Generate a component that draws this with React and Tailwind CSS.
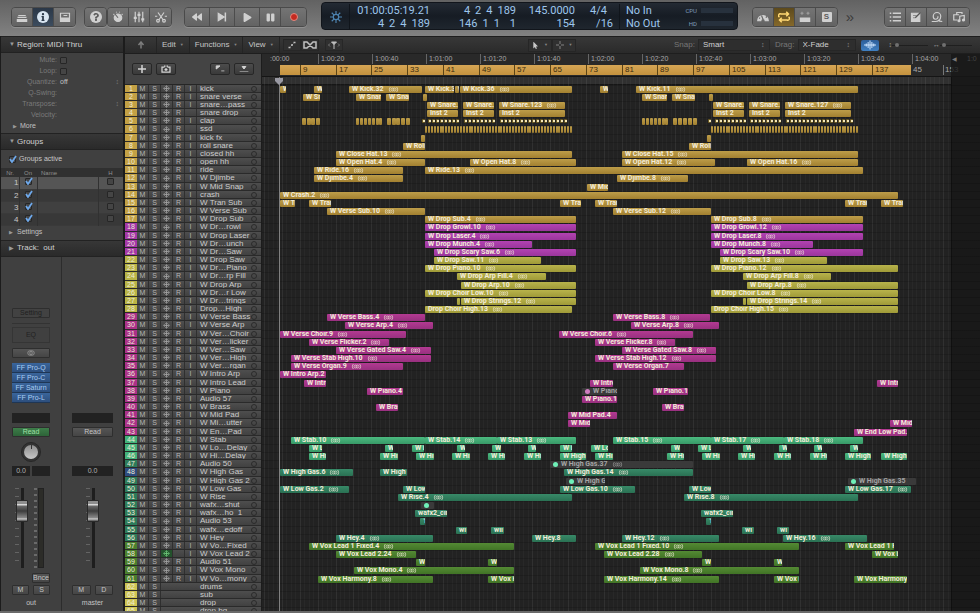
import { FaBackward, FaPlay, FaPause, FaInfo, FaQuestion, FaMousePointer } from 'react-icons/fa';
import { LuSnowflake } from 'react-icons/lu';

// timeline geometry, in window pixels
const LANES_X = 262;
const BAR_ONE = 264;
const BAR_WIDTH = 143 / 32;

const GOLD = 'bg-linear-to-b from-[#bd9d49] to-[#a28030]';
const PURPLE = 'bg-linear-to-b from-[#b342b3] to-[#9a369b]';
const YELLOW = 'bg-linear-to-b from-[#b8b34b] to-[#9f9a38]';
const PINK = 'bg-linear-to-b from-[#b33a92] to-[#98307f]';
const MINT = 'bg-linear-to-b from-[#4bba80] to-[#389a67]';
const TEAL = 'bg-linear-to-b from-[#388a68] to-[#2a7153]';
const LIME = 'bg-linear-to-b from-[#548a34] to-[#417426]';

const FILL = { gold: GOLD, purple: PURPLE, yellow: YELLOW, pink: PINK, mint: MINT, teal: TEAL, lime: LIME };

const BADGE = {
  gold: 'bg-[#c3a145]',
  purple: 'bg-[#a537a8]',
  yellow: 'bg-[#b8b446]',
  pink: 'bg-[#ab3189]',
  mint: 'bg-[#43b27a]',
  teal: 'bg-[#2d7b5b]',
  lime: 'bg-[#4a7f2e]',
  blue: 'bg-[#2d4c80]',
  stack: 'bg-[#cdc453]',
};

// region: [start, end, label, flags]; flags: t = loop mark, m = muted take, d = white dot
function run(from, count, step, width, flag) {
  return Array.from({ length: count }, (_, i) => {
    const x = Math.round(from + i * step);
    return [x, x + width, '', flag];
  });
}

const TRACKS = [
  ['kick', 'gold', [[280, 286, 'W'], [314, 322, 'W'], [349, 422, 'W Kick.32', 't'], [425, 454, 'W Kick.3'], [455, 459, 'W'], [460, 572, 'W Kick.36', 't'], [600, 608, 'W'], [636, 858, 'W Kick.11', 't']]],
  ['snare verse', 'gold', [[303, 320, 'W Snar'], [356, 381, 'W Snar'], [386, 409, 'W Snar'], [423, 427, ''], [642, 667, 'W Snar'], [672, 695, 'W Snar'], [709, 713, '']]],
  ['snare…pass', 'gold', [[427, 458, 'W Snare.'], [463, 494, 'W Snare.'], [499, 565, 'W Snare.123', 't'], [713, 744, 'W Snare.'], [749, 780, 'W Snare.'], [785, 851, 'W Snare.127', 't']]],
  ['snare drop', 'gold', [[427, 458, 'Inst 2'], [463, 494, 'Inst 2'], [499, 565, 'Inst 2'], [713, 744, 'Inst 2'], [749, 780, 'Inst 2'], [785, 851, 'Inst 2']]],
  ['clap', 'gold', [
    ...run(302, 4, 4.6, 4), ...run(356, 7, 3.9, 3), ...run(387, 5, 4.7, 4),
    ...run(422, 1, 4, 1, 'd'), ...run(428, 8, 4, 1, 'd'), ...run(464, 8, 4, 1, 'd'), ...run(500, 17, 4, 1, 'd'),
    ...run(642, 7, 3.9, 3), ...run(673, 5, 4.9, 4),
    ...run(708, 1, 4, 1, 'd'), ...run(715, 8, 4, 1, 'd'), ...run(750, 8, 4, 1, 'd'), ...run(786, 17, 4, 1, 'd'),
  ]],
  ['ssd', 'gold', [...run(425, 51, 2.9, 2), ...run(711, 51, 2.9, 2)]],
  ['kick fx', 'gold', [[421, 425, ''], [707, 711, '']]],
  ['roll snare', 'gold', [[403, 425, 'W Roll'], [689, 711, 'W Roll']]],
  ['closed hh', 'gold', [[336, 572, 'W Close Hat.13', 't'], [622, 858, 'W Close Hat.15', 't']]],
  ['open hh', 'gold', [[336, 425, 'W Open Hat.4', 't'], [470, 576, 'W Open Hat.8', 't'], [622, 715, 'W Open Hat.12', 't'], [747, 858, 'W Open Hat.16', 't']]],
  ['ride', 'gold', [[314, 403, 'W Ride.16', 't'], [425, 863, 'W Ride.13', 't']]],
  ['W Djimbe', 'gold', [[314, 403, 'W Djimbe.4', 't'], [617, 688, 'W Djimbe.8', 't']]],
  ['W Mid Snap', 'gold', [[587, 608, 'W Mid']]],
  ['crash', 'gold', [[280, 898, 'W Crash.2', 't']]],
  ['W Tran Sub', 'gold', [[280, 295, 'W Tr'], [309, 331, 'W Tran'], [560, 581, 'W Tran'], [595, 617, 'W Tran'], [845, 867, 'W Tran'], [881, 903, 'W Tran']]],
  ['W Verse Sub', 'gold', [[327, 425, 'W Verse Sub.10', 't'], [613, 711, 'W Verse Sub.12', 't']]],
  ['W Drop Sub', 'gold', [[425, 576, 'W Drop Sub.4', 't'], [711, 863, 'W Drop Sub.8', 't']]],
  ['W Dr…rowl', 'purple', [[425, 576, 'W Drop Growl.10', 't'], [711, 863, 'W Drop Growl.12', 't']]],
  ['W Drop Laser', 'purple', [[425, 576, 'W Drop Laser.4', 't'], [711, 863, 'W Drop Laser.8', 't']]],
  ['W Dr…unch', 'purple', [[425, 532, 'W Drop Munch.4', 't'], [711, 813, 'W Drop Munch.8', 't']]],
  ['W Dr…Saw', 'purple', [[434, 576, 'W Drop Scary Saw.6', 't'], [720, 863, 'W Drop Scary Saw.10', 't']]],
  ['W Drop Saw', 'yellow', [[434, 541, 'W Drop Saw.11', 't'], [720, 827, 'W Drop Saw.13', 't']]],
  ['W Dr…Piano', 'yellow', [[425, 576, 'W Drop Piano.10', 't'], [711, 898, 'W Drop Piano.12', 't']]],
  ['W Dr…rp Fill', 'yellow', [[457, 546, 'W Drop Arp Fill.4', 't'], [743, 831, 'W Drop Arp Fill.8', 't']]],
  ['W Drop Arp', 'yellow', [[461, 576, 'W Drop Arp.10', 't'], [747, 898, 'W Drop Arp.8', 't']]],
  ['W Dr…r Low', 'yellow', [[425, 576, 'W Drop Choir Low.10', 't'], [711, 898, 'W Drop Choir Low.8', 't']]],
  ['W Dr…trings', 'yellow', [[457, 460, ''], [461, 576, 'W Drop Strings.12', 't'], [743, 746, ''], [747, 898, 'W Drop Strings.14', 't']]],
  ['Drop…High', 'yellow', [[425, 572, 'Drop Choir High.13', 't'], [711, 898, 'Drop Choir High.15', 't']]],
  ['W Verse Bass', 'pink', [[327, 425, 'W Verse Bass.4', 't'], [613, 710, 'W Verse Bass.8', 't']]],
  ['W Verse Arp', 'pink', [[345, 433, 'W Verse Arp.4', 't'], [631, 719, 'W Verse Arp.8', 't']]],
  ['W Ver…Choir', 'pink', [[280, 406, 'W Verse Choir.9', 't'], [559, 693, 'W Verse Choir.6', 't']]],
  ['W Ver…licker', 'pink', [[309, 389, 'W Verse Flicker.2', 't'], [595, 675, 'W Verse Flicker.8', 't']]],
  ['W Ver…Saw', 'pink', [[336, 431, 'W Verse Gated Saw.4', 't'], [622, 716, 'W Verse Gated Saw.8', 't']]],
  ['W Ver…High', 'pink', [[291, 431, 'W Verse Stab High.10', 't'], [595, 716, 'W Verse Stab High.12', 't']]],
  ['W Ver…rgan', 'pink', [[291, 403, 'W Verse Organ.9', 't'], [613, 684, 'W Verse Organ.7']]],
  ['W Intro Arp', 'pink', [[280, 326, 'W Intro Arp.2']]],
  ['W Intro Lead', 'pink', [[304, 326, 'W Intro'], [590, 613, 'W Intro'], [877, 898, 'W Intro']]],
  ['W Piano', 'pink', [[367, 403, 'W Piano.4'], [582, 617, 'W Piano', 'm'], [653, 688, 'W Piano.12']]],
  ['Audio 57', 'pink', [[582, 617, 'W Piano.14']]],
  ['W Brass', 'pink', [[376, 398, 'W Bras'], [662, 684, 'W Bras']]],
  ['W Mid Pad', 'pink', [[568, 617, 'W Mid Pad.4']]],
  ['W Mi…utter', 'pink', [[568, 590, 'W Mid'], [890, 912, 'W Mid']]],
  ['W En…Pad', 'pink', [[854, 907, 'W End Low Pad.']]],
  ['W Stab', 'mint', [[291, 425, 'W Stab.10', 't'], [425, 497, 'W Stab.14', 't'], [497, 576, 'W Stab.13', 't'], [613, 711, 'W Stab.15', 't'], [711, 784, 'W Stab.17', 't'], [784, 863, 'W Stab.18', 't']]],
  ['W Lo…Delay', 'mint', [[309, 322, 'W L'], [385, 393, 'W'], [412, 424, 'W L'], [457, 465, 'W'], [492, 501, 'W'], [528, 536, 'W'], [560, 572, 'W L'], [591, 608, 'W Lo'], [671, 680, 'W'], [698, 711, 'W L'], [743, 751, 'W'], [779, 787, 'W'], [814, 822, 'W'], [850, 858, 'W']]],
  ['W Hi…Delay', 'mint', [[309, 326, 'W Hi'], [380, 398, 'W Hi'], [416, 434, 'W Hi'], [452, 470, 'W Hi'], [488, 505, 'W Hi'], [524, 541, 'W Hi'], [560, 586, 'W High'], [595, 613, 'W Hi'], [667, 684, 'W Hi'], [702, 720, 'W Hi'], [738, 755, 'W Hi'], [774, 791, 'W Hi'], [810, 827, 'W Hi'], [845, 871, 'W High'], [881, 907, 'W High']]],
  ['Audio 50', 'teal', [[550, 693, 'W High Gas.37', 'mt']]],
  ['W High Gas', 'teal', [[280, 353, 'W High Gas.6', 't'], [380, 407, 'W High'], [564, 693, 'W High Gas.14', 't']]],
  ['W High Gas 2', 'teal', [[566, 605, 'W High G', 'm'], [848, 916, 'W High Gas.35', 'm']]],
  ['W Low Gas', 'teal', [[280, 349, 'W Low Gas.2', 't'], [403, 425, 'W Low'], [560, 635, 'W Low Gas.10', 't'], [689, 711, 'W Low'], [845, 911, 'W Low Gas.17', 't']]],
  ['W Rise', 'teal', [[398, 572, 'W Rise.4', 't'], [684, 858, 'W Rise.8', 't']]],
  ['wafx…shut', 'teal', [[421, 434, '', 'm']]],
  ['wafx…ho_1', 'teal', [[415, 447, 'wafx2_cine'], [701, 733, 'wafx2_cine']]],
  ['Audio 53', 'teal', [[420, 425, '1'], [706, 711, '1']]],
  ['wafx…edoff', 'teal', [[456, 467, 'wi'], [491, 504, 'wii'], [742, 754, 'wi'], [777, 789, 'wi']]],
  ['W Hey', 'teal', [[336, 433, 'W Hey.4', 't'], [532, 576, 'W Hey.8'], [622, 719, 'W Hey.12', 't'], [783, 867, 'W Hey.16', 't']]],
  ['W Vo…Fixed', 'lime', [[309, 514, 'W Vox Lead 1 Fixed.4', 't'], [595, 799, 'W Vox Lead 1 Fixed.10', 't'], [845, 894, 'W Vox Lead 1 F']]],
  ['W Vox Lead 2', 'lime', [[336, 416, 'W Vox Lead 2.24', 't'], [604, 702, 'W Vox Lead 2.28', 't'], [872, 898, 'W Vox L']]],
  ['Audio 51', 'lime', [[416, 425, 'W'], [488, 497, 'W'], [702, 711, 'W'], [774, 782, 'W']]],
  ['W Vox Mono', 'lime', [[354, 514, 'W Vox Mono.4', 't'], [640, 799, 'W Vox Mono.8', 't']]],
  ['W Vo…mony', 'lime', [[318, 433, 'W Vox Harmony.8', 't'], [488, 514, 'W Vox H'], [604, 719, 'W Vox Harmony.14', 't'], [774, 799, 'W Vox H'], [854, 907, 'W Vox Harmony']]],
  ['drums', 'stack', []],
  ['sub', 'stack', []],
  ['drop', 'stack', []],
  ['drop bg', 'stack', []],
];

const TIMES = ['1:00:20', '1:00:40', '1:01:00', '1:01:20', '1:01:40', '1:02:00', '1:02:20', '1:02:40', '1:03:00', '1:03:20', '1:03:40', '1:04:00'];
const BARS = Array.from({ length: 17 }, (_, i) => 9 + i * 8);
const INSERTS = ['FF Pro-Q', 'FF Pro-C', 'FF Saturn', 'FF Pro-L'];

/* ---------- toolbar ---------- */

function ToolButton({ label, active, gold, wide, children }) {
  return (
    <button
      aria-label={label}
      className={`flex h-[18px] items-center justify-center border-r border-[#4c4c4c] last:border-r-0 ${wide ? 'w-[25px]' : 'w-[21px]'} ${
        active ? 'bg-linear-to-b from-[#2b3848] to-[#3c4c5e] text-[#e6f0fa]'
        : gold ? 'bg-linear-to-b from-[#5d4a1c] to-[#85682a] text-[#ffd873]'
        : 'bg-linear-to-b from-[#747474] to-[#636363] text-[#d0d0d0]'
      }`}
    >
      {children}
    </button>
  );
}

function Group({ children }) {
  return <div className="flex shrink-0 overflow-hidden rounded-sm border border-[#4a4a4a] shadow-[0_1px_0_#8f8f8f]">{children}</div>;
}

function Icon({ children, size = 'size-3' }) {
  return (
    <svg viewBox="0 0 16 16" className={size} fill="none" stroke="currentColor" strokeWidth="1.6">
      {children}
    </svg>
  );
}

function Digits({ parts }) {
  return (
    <span className="flex justify-end gap-[5px]">
      {parts.map((p, i) => <span key={i}>{p}</span>)}
    </span>
  );
}

function Lcd() {
  return (
    <div className="mx-[14px] flex h-7 flex-1 overflow-hidden rounded-sm border border-[#11151b] bg-linear-to-b from-[#232a33] via-[#161c24] to-[#1f262e] pt-px font-[Roboto] text-[11px] leading-[13px] text-[#9dc6ec]">
      <div className="flex w-7 items-center justify-center border-r border-[#10151b] text-[#4d83b0]">
        <Icon>
          <circle cx="8" cy="8" r="3.6" />
          <path d="M8 0v4M8 12v4M0 8h4M12 8h4M2.3 2.3l2.9 2.9M10.8 10.8l2.9 2.9M2.3 13.7l2.9-2.9M10.8 5.2l2.9-2.9" />
        </Icon>
      </div>
      <div className="w-20 text-right">
        <p>01:00:05:19.21</p>
        <Digits parts={['4', '2', '4', '189']} />
      </div>
      <div className="w-[86px] text-right">
        <Digits parts={['4', '2', '4', '189']} />
        <Digits parts={['146', '1', '1', '', '1']} />
      </div>
      <div className="w-[59px] text-right">
        <p>145.0000</p>
        <p>154</p>
      </div>
      <div className="w-[38px] text-right">
        <p className="pr-[6px]">4/4</p>
        <p>/16</p>
      </div>
      <div className="ml-[6px] w-14 border-l border-[#10151b] pl-[6px]">
        <p>No In</p>
        <p>No Out</p>
      </div>
      <div className="ml-auto w-14 pr-1 text-[6px] text-[#7f9dbb]">
        {['CPU', 'HD'].map(m => (
          <div key={m} className="flex h-[13px] items-center gap-1">
            <span className="w-4 text-right">{m}</span>
            <span className="h-[5px] flex-1 bg-[#27313d]" />
          </div>
        ))}
      </div>
    </div>
  );
}

function Toolbar() {
  return (
    <header className="flex h-9 shrink-0 items-start bg-linear-to-b from-[#626262] to-[#828282] pt-[2px] pr-[10px] pl-[11px]">
      <div className="flex pt-[5px]">
        <Group>
          <ToolButton label="Library">
            <Icon><path d="M3 6h10M2 8.500h12" /><path d="M1 12.500h14" strokeWidth="4" /></Icon>
          </ToolButton>
          <ToolButton label="Inspector" active>
            <span className="flex size-3 items-center justify-center rounded-full bg-[#d9e6f2] text-[#2c3a4a]"><FaInfo size={8} /></span>
          </ToolButton>
          <ToolButton label="Toolbar">
            <Icon><path d="M2 3h12v11H2z" /><path d="M2 11h12" strokeWidth="5" /><path d="M6 6h5" /></Icon>
          </ToolButton>
        </Group>
        <div className="ml-2 flex">
          <Group>
            <ToolButton label="Quick Help">
              <span className="flex size-3 items-center justify-center rounded-full bg-[#d0d0d0] text-[#5c5c5c]"><FaQuestion size={8} /></span>
            </ToolButton>
          </Group>
          <Group>
            <ToolButton label="Smart Controls">
              <Icon><circle cx="8" cy="9" r="5" fill="currentColor" /><path d="M8 9 4 4" stroke="#666" /><path d="M2 4l1 1M6 1v1M10 1v1M14 4l-1 1" /></Icon>
            </ToolButton>
            <ToolButton label="Mixer">
              <Icon><path d="M3 1v14M8 1v14M13 1v14" /><path d="M1 9h4M6 5h4M11 11h4" strokeWidth="3" /></Icon>
            </ToolButton>
            <ToolButton label="Editors">
              <Icon><path d="M4 2l7 10M12 2 5 12M0 7h3M13 7h3" /><circle cx="4" cy="13" r="1.800" /><circle cx="12" cy="13" r="1.800" /></Icon>
            </ToolButton>
          </Group>
        </div>
        <div className="ml-3">
          <Group>
            <ToolButton label="Rewind" wide><FaBackward size={10} /></ToolButton>
            <ToolButton label="Forward to end" wide>
              <Icon><path d="M3 3v10l8-5z" fill="currentColor" /><path d="M12.500 2v12" strokeWidth="2" /></Icon>
            </ToolButton>
            <ToolButton label="Play" wide><FaPlay size={9} /></ToolButton>
            <ToolButton label="Pause"><FaPause size={9} /></ToolButton>
            <ToolButton label="Record" wide><span className="size-2 rounded-full border border-[#e48a80] bg-[#c42a20]" /></ToolButton>
          </Group>
        </div>
      </div>

      <Lcd />

      <div className="flex items-start pt-[5px]">
        <Group>
          <ToolButton label="Replace">
            <Icon><path d="M1 13a7 7 0 1 1 14 0h-4a3 3 0 0 0-6 0z" fill="currentColor" /><path d="M8 11 6 6M3 9l1 1M12 9l1-2" stroke="#666" /></Icon>
          </ToolButton>
          <ToolButton label="Cycle" gold>
            <Icon><path d="M11 1l3 3-3 3M14 4H4a2 2 0 0 0-2 4M5 9l-3 3 3 3M2 12h10a2 2 0 0 0 2-4" strokeWidth="2" /></Icon>
          </ToolButton>
          <ToolButton label="Autopunch">
            <Icon><path d="M4 1v4M2 3h4M12 1v4M10 3h4" opacity=".5" /><path d="M1 11.500h14" strokeWidth="6" /></Icon>
          </ToolButton>
          <ToolButton label="Solo">
            <span className="flex size-[10px] items-center justify-center rounded-[1px] bg-[#d0d0d0] text-[8px] leading-none font-bold text-[#5c5c5c]">S</span>
          </ToolButton>
        </Group>
        <button aria-label="More controls" className="h-5 w-6 text-[15px] leading-4 text-[#3c3c3c]">»</button>
        <div className="ml-[22px]">
          <Group>
            <ToolButton label="Lists">
              <Icon><path d="M5 3h11M5 8h11M5 13h11" strokeWidth="2" /><path d="M1 3h2M1 8h2M1 13h2" strokeWidth="2" /></Icon>
            </ToolButton>
            <ToolButton label="Notes">
              <Icon><path d="M2 3h11v11H2z" fill="currentColor" /><path d="M14 2 7 9" stroke="#555" /><path d="M4 6h5M4 9h3" stroke="#777" strokeWidth="1" /></Icon>
            </ToolButton>
            <ToolButton label="Loops">
              <Icon><path d="M1 14h5c4 0 7-3 7-7a5 5 0 0 0-10 0c0 2 1 4 3 4s4-2 3-4M9 12c2 2 4 2 6 2" /></Icon>
            </ToolButton>
            <ToolButton label="Media">
              <Icon><path d="M5 5V2h7v2M8 5H1v7h5M9 13V7l6-1v6" /><circle cx="8" cy="13" r="1.300" fill="currentColor" /><circle cx="14" cy="12" r="1.300" fill="currentColor" /></Icon>
            </ToolButton>
          </Group>
        </div>
      </div>
    </header>
  );
}

/* ---------- inspector ---------- */

function Tick({ id, label, checked }) {
  return (
    <span className="relative inline-flex size-[7px]">
      <input
        id={id}
        type="checkbox"
        defaultChecked={checked}
        aria-label={label}
        className="peer size-[7px] appearance-none rounded-[1px] border border-[#262626] bg-[#454545]"
      />
      <svg viewBox="0 0 8 8" className="pointer-events-none absolute -top-px left-0 hidden size-2 peer-checked:block" fill="none" stroke="#6ea8ea" strokeWidth="1.800">
        <path d="M1 4l2 3 4-6" />
      </svg>
    </span>
  );
}

function SectionHead({ open, children }) {
  return (
    <h2 className="flex h-[17px] items-center border-y border-[#222] bg-linear-to-b from-[#373737] to-[#2a2a2a] pl-2 text-[8px] text-[#d0d0d0]">
      <span className="w-2 text-[6px] text-[#9a9a9a]">{open ? '▼' : '▶'}</span>
      {children}
    </h2>
  );
}

function Param({ label, tick, value, stepper }) {
  return (
    <div className="flex h-[11px] items-center text-[7px] text-[#7a7a7a]">
      <label htmlFor={tick ? label : undefined} className="w-14 text-right">{label}:</label>
      <span className="ml-[3px] flex flex-1 text-[#c4c4c4]">{tick ? <Tick id={label} /> : value}</span>
      {stepper && <span className="pr-1 text-[7px]">↕</span>}
    </div>
  );
}

function Groups() {
  return (
    <table className="w-full table-fixed border-collapse text-[8px] text-[#c8c8c8]">
      <thead className="bg-[#303030] text-[6px] text-[#909090]">
        <tr className="h-[9px] leading-[8px]">
          <th className="w-[18px] font-normal">Nr.</th>
          <th className="w-[18px] font-normal">On</th>
          <th className="pl-1 text-left font-normal">Name</th>
          <th className="w-[25px] font-normal">H</th>
        </tr>
      </thead>
      <tbody>
        {[1, 2, 3, 4].map(n => (
          <tr key={n} className="h-3 border-b border-[#3a3a3a] leading-[11px] first:bg-[#555] even:bg-[#383838]">
            <td className="text-right">{n}</td>
            <td className="border-x border-[#313131] text-center"><Tick label={`Group ${n} on`} checked /></td>
            <td />
            <td className="border-l border-[#313131] text-center"><Tick label={`Group ${n} hide`} /></td>
          </tr>
        ))}
      </tbody>
    </table>
  );
}

function Fader({ label }) {
  return (
    <span className="relative flex h-20 w-3 justify-center">
      <span className="absolute inset-y-0 -left-px w-1 bg-[repeating-linear-gradient(to_bottom,#646464_0_1px,transparent_1px_8px)]" />
      <span className="absolute inset-y-0 left-[5px] w-[3px] bg-[#1e1e1e]" />
      <input
        type="range"
        aria-label={label}
        defaultValue={79}
        className="relative h-20 w-3 appearance-none bg-transparent [direction:rtl] [writing-mode:vertical-lr] [&::-webkit-slider-thumb]:h-[22px] [&::-webkit-slider-thumb]:w-3 [&::-webkit-slider-thumb]:appearance-none [&::-webkit-slider-thumb]:rounded-[1px] [&::-webkit-slider-thumb]:border [&::-webkit-slider-thumb]:border-[#2a2a2a] [&::-webkit-slider-thumb]:bg-[linear-gradient(to_bottom,#8e8e8e_0_3px,#d8d8d8_3px_4px,#6a6a6a_5px,#3c3c3c_10px,#8c8c8c_17px,#dedede_18px,#6a6a6a_19px)]"
      />
    </span>
  );
}

function StripButton({ children, tone = 'bg-linear-to-b from-[#555] to-[#454545] text-[#c4c4c4]' }) {
  return <button className={`block h-[10px] w-full rounded-[1px] border border-[#2e2e2e] text-[7px] leading-[8px] ${tone}`}>{children}</button>;
}

function Well({ wide, children }) {
  return <div className={`h-[10px] bg-[#222] text-center text-[7px] leading-[10px] text-[#b0b0b0] ${wide ? 'w-full' : 'w-[18px]'}`}>{children}</div>;
}

function OutStrip() {
  return (
    <section className="flex w-[61px] flex-col justify-end border-r border-[#2c2c2c] px-[11px] pb-1">
      <div className="border-b border-[#333] pb-[5px]">
        <StripButton tone="bg-[#424242] text-[#1f1f1f]">Setting</StripButton>
      </div>
      <div className="mt-[3px] h-4 border border-[#353535] text-center text-[7px] leading-[14px] text-[#222]">EQ</div>
      <div className="mt-[5px]">
        <StripButton>
          <svg viewBox="0 0 16 12" className="mx-auto h-[6px] w-2" fill="none" stroke="#999" strokeWidth="1.600">
            <circle cx="6" cy="6" r="4.500" /><circle cx="10" cy="6" r="4.500" />
          </svg>
        </StripButton>
      </div>
      <div className="mt-[5px] flex flex-col">
        {INSERTS.map(name => (
          <button key={name} className="h-[10px] border-b border-[#1f3654] bg-linear-to-b from-[#3a659c] to-[#2d4f7d] text-[7px] leading-[9px] text-[#a9cdf3]">{name}</button>
        ))}
      </div>
      <div className="mt-[10px] flex"><Well wide /></div>
      <div className="mt-1"><StripButton tone="bg-linear-to-b from-[#3d7d49] to-[#2d6338] text-[#9fe0a8]">Read</StripButton></div>
      <div className="mt-[5px] flex justify-center">
        <span className="flex size-5 items-center justify-center rounded-full border border-[#272727] bg-[#333]">
          <span className="flex size-[14px] justify-center rounded-full bg-linear-to-b from-[#8e8e8e] to-[#c8c8c8]"><span className="h-1 w-px bg-[#333]" /></span>
        </span>
      </div>
      <div className="mt-1 flex justify-between"><Well>0.0</Well><Well /></div>
      <div className="mt-[12px] flex justify-between pr-[6px] pl-1">
        <Fader label="out volume" />
        <span className="flex gap-px">
          <span className="w-[3px] bg-[repeating-linear-gradient(to_bottom,#6a6a6a_0_2px,transparent_2px_6px)]" />
          <span className="w-[6px] border border-[#222] bg-[#2c2c28]" />
        </span>
      </div>
      <div className="mt-[5px] ml-5"><StripButton>Bnce</StripButton></div>
      <div className="mt-[2px] flex gap-1"><StripButton>M</StripButton><StripButton>S</StripButton></div>
      <p className="mt-1 h-2 text-center text-[7px] leading-[8px] text-[#c4c4c4]">out</p>
    </section>
  );
}

function MasterStrip() {
  return (
    <section className="flex flex-1 flex-col justify-end px-[10px] pb-1">
      <div className="flex"><Well wide /></div>
      <div className="mt-1"><StripButton>Read</StripButton></div>
      <div className="mt-[29px] flex"><Well wide>0.0</Well></div>
      <div className="mt-[12px] flex justify-center"><Fader label="master volume" /></div>
      <div className="mt-[17px] flex gap-1"><StripButton>M</StripButton><StripButton>D</StripButton></div>
      <p className="mt-1 h-2 text-center text-[7px] leading-[8px] text-[#c4c4c4]">master</p>
    </section>
  );
}

function Inspector() {
  return (
    <aside className="flex w-[122px] shrink-0 flex-col overflow-hidden bg-[#404040]">
      <SectionHead open>Region: MIDI Thru</SectionHead>
      <div className="pt-[2px] pb-px">
        <Param label="Mute" tick />
        <Param label="Loop" tick />
        <Param label="Quantize" value="off" stepper />
        <Param label="Q-Swing" />
        <Param label="Transpose" stepper />
        <Param label="Velocity" />
        <p className="flex h-[11px] items-center pl-3 text-[7px] text-[#c0c0c0]"><span className="w-[7px] text-[5px] text-[#999]">▶</span>More</p>
      </div>
      <SectionHead open>Groups</SectionHead>
      <div className="flex h-[18px] items-center gap-[3px] pl-2 text-[7px] text-[#c8c8c8]">
        <Tick id="groups-active" checked />
        <label htmlFor="groups-active">Groups active</label>
      </div>
      <Groups />
      <p className="flex h-[14px] items-center pl-2 text-[7px] text-[#c0c0c0]"><span className="w-2 text-[5px] text-[#999]">▶</span>Settings</p>
      <SectionHead>Track:&nbsp; out</SectionHead>
      <div className="flex min-h-0 flex-1">
        <OutStrip />
        <MasterStrip />
      </div>
    </aside>
  );
}

/* ---------- tracks area ---------- */

function Menu({ children }) {
  return (
    <button className="flex h-full items-center gap-1 border-r border-[#242424] px-[5px] text-[8px] text-[#c6c6c6]">
      {children}
      <span className="text-[4px] text-[#888]">▼</span>
    </button>
  );
}

function Pick({ id, label, value }) {
  return (
    <div className="flex items-center">
      <label htmlFor={id} className="pr-[3px] text-[8px] text-[#777]">{label}:</label>
      <span className="flex h-3 items-center border border-[#262626] bg-[#2e2e2e]">
        <select id={id} className={`appearance-none pl-1 text-[8px] leading-[10px] text-[#d0d0d0] ${id === 'snap' ? 'w-[62px]' : 'w-12'}`}>
          <option>{value}</option>
        </select>
        <span className="w-2 text-[7px] text-[#888]">↕</span>
      </span>
    </div>
  );
}

const SMALL_RANGE = 'h-[7px] appearance-none bg-[linear-gradient(#1f1f1f,#1f1f1f)] bg-[length:100%_1px] bg-center bg-no-repeat [&::-webkit-slider-thumb]:size-1 [&::-webkit-slider-thumb]:appearance-none [&::-webkit-slider-thumb]:rounded-full [&::-webkit-slider-thumb]:bg-[#707070]';

function MenuBar() {
  return (
    <div className="flex h-[18px] shrink-0 items-center border-y border-[#1e1e1e] bg-linear-to-b from-[#383838] to-[#2a2a2a]">
      <button aria-label="Hierarchy up" className="flex h-full w-8 items-center justify-center border-r border-[#242424] text-[#7e7e7e]">
        <Icon size="size-2"><path d="M8 15V5M3 8l5-6 5 6" strokeWidth="3" /></Icon>
      </button>
      <Menu>Edit</Menu>
      <Menu>Functions</Menu>
      <Menu>View</Menu>
      <div className="ml-[3px] flex text-[#c0c0c0]">
        <button aria-label="Automation" className="flex h-3 w-[18px] items-center justify-center border border-[#272727] bg-[#303030]">
          <Icon size="size-2"><path d="M3 13 13 3" strokeDasharray="2 2" /><path d="M1 13h4M6 8h4M11 3h4" strokeWidth="3" /></Icon>
        </button>
        <button aria-label="Flex" className="flex h-3 w-[18px] items-center justify-center border border-[#272727] bg-[#303030]">
          <svg viewBox="0 0 28 16" className="h-2 w-[14px]" fill="none" stroke="currentColor" strokeWidth="3"><path d="M2 2h6l12 12h6V2h-6L8 14H2z" /></svg>
        </button>
        <button aria-label="Catch" className="ml-[6px] flex h-3 w-[18px] items-center justify-center border border-[#272727] bg-[#303030]">
          <svg viewBox="0 0 24 16" className="h-2 w-3" fill="none" stroke="currentColor" strokeWidth="2"><path d="M7 2h10l-5 5z" fill="currentColor" /><path d="M12 6v10" /><path d="M4 5 1 8l3 3M20 5l3 3-3 3" opacity=".5" /></svg>
        </button>
      </div>
      <div className="mr-[98px] ml-auto flex">
        <button aria-label="Left tool" className="flex h-[13px] w-6 items-center justify-center gap-[5px] border border-[#262626] bg-[#303030] text-[#c8c8c8]">
          <FaMousePointer size={7} /><span className="text-[4px] text-[#888]">▼</span>
        </button>
        <button aria-label="Command tool" className="flex h-[13px] w-6 items-center justify-center gap-[5px] border border-[#262626] bg-[#303030] text-[#9a9a9a]">
          <Icon size="size-2"><path d="M8 0v6M8 10v6M0 8h6M10 8h6" /></Icon><span className="text-[4px] text-[#888]">▼</span>
        </button>
      </div>
      <div className="flex items-center gap-[5px] pr-2">
        <Pick id="snap" label="Snap" value="Smart" />
        <Pick id="drag" label="Drag" value="X-Fade" />
        <button aria-label="Waveform zoom" className="flex h-[11px] w-[18px] items-center justify-center rounded-[2px] bg-linear-to-b from-[#2e5f9a] to-[#3f7fc0] text-[#cfe6ff]">
          <Icon><path d="M0 8h16M3 6v4M5.500 4v8M8 2v12M10.500 4v8M13 6v4" strokeWidth="1.300" /></Icon>
        </button>
        <span className="flex items-center pl-[5px] text-[7px] text-[#a0a0a0]">
          ↕<input aria-label="Vertical zoom" type="range" defaultValue={8} className={`w-9 ${SMALL_RANGE}`} />
        </span>
        <span className="flex items-center text-[7px] text-[#a0a0a0]">
          ↔<input aria-label="Horizontal zoom" type="range" defaultValue={8} className={`w-8 ${SMALL_RANGE}`} />
        </span>
      </div>
    </div>
  );
}

function HeadButton({ label, children }) {
  return (
    <button aria-label={label} className="flex h-3 w-5 items-center justify-center rounded-[2px] border border-[#272727] bg-linear-to-b from-[#4c4c4c] to-[#3a3a3a] text-[#d4d4d4]">
      {children}
    </button>
  );
}

function TrackRow({ number, name, color }) {
  const stack = color === 'stack';
  const frozen = name === 'W Vox Lead 2';
  const software = number === 4 || number === 6;
  const cell = 'w-3 border-r border-[#2f2f2f] text-center';
  return (
    <li className="flex h-2 border-b border-[#2a2a2a] bg-linear-to-b from-[#4e4e4e] to-[#414141] text-[7px] leading-[8px] text-[#b4b4b4] nth-[6n]:h-[9px]">
      <span className={`w-3 shrink-0 overflow-hidden text-center text-[#f0ecd8] ${BADGE[number === 48 ? 'blue' : color]}`}>{number}</span>
      <button aria-label={`Mute ${name}`} className={cell}>M</button>
      <button aria-label={`Solo ${name}`} className={cell}>S</button>
      {stack ? <span className="w-9" /> : (
        <>
          <button aria-label={`Freeze ${name}`} className={`${cell} flex items-center justify-center ${frozen ? 'bg-[#23522c] text-[#7de08a]' : ''}`}>
            <LuSnowflake size={7} />
          </button>
          <button aria-label={`Record ${name}`} className={cell}>{!frozen && 'R'}</button>
          <button aria-label={`Input ${name}`} className={cell}>{!software && 'I'}</button>
        </>
      )}
      <span className="min-w-0 flex-1 overflow-hidden pl-[3px] text-[8px] whitespace-nowrap text-[#cdcdcd]">{name}</span>
      <span className="mr-1 size-[6px] shrink-0 self-center rounded-full border border-[#2b2b2b]" />
    </li>
  );
}

function TrackList() {
  return (
    <div className="flex w-[137px] shrink-0 flex-col overflow-hidden border-r border-[#1c1c1c] bg-[#444]">
      <div className="flex h-[31px] shrink-0 items-center gap-1 border-b border-[#262626] px-[7px]">
        <HeadButton label="New track"><Icon size="size-2"><path d="M8 0v16M0 8h16" strokeWidth="3" /></Icon></HeadButton>
        <HeadButton label="Duplicate track">
          <svg viewBox="0 0 20 16" className="h-2 w-[10px]" fill="none" stroke="currentColor" strokeWidth="2.500"><path d="M7 4H2v10h16V4h-5M7 9h6M10 6v6M6 2h3M11 2h3" /></svg>
        </HeadButton>
        <span className="flex-1" />
        <HeadButton label="Automation header"><Icon size="size-[10px]"><path d="M2 3h6L2 8z" fill="currentColor" /><path d="M10 11h5" strokeWidth="2" opacity=".6" /></Icon></HeadButton>
        <HeadButton label="Header options"><Icon size="size-[10px]"><path d="M5 4h6l-3 4z" fill="currentColor" /><path d="M1 12h14" opacity=".5" /></Icon></HeadButton>
      </div>
      <ol className="min-h-0 flex-1 overflow-hidden">
        {TRACKS.map(([name, color], i) => <TrackRow key={i} number={i + 1} name={name} color={color} />)}
      </ol>
    </div>
  );
}

function LoopMark() {
  return (
    <svg viewBox="0 0 22 14" className="ml-1 h-[7px] w-[11px] shrink-0" fill="none" stroke="currentColor" strokeWidth="1.800" opacity=".75">
      <path d="M5 2C2 4 2 10 5 12M17 2c3 2 3 8 0 10" />
      <circle cx="9" cy="7" r="3" />
      <circle cx="13" cy="7" r="3" />
    </svg>
  );
}

function Region({ region, color }) {
  const [start, end, label, flags = ''] = region;
  const style = { left: start - LANES_X, width: end - start };
  if (flags === 'd') {
    return (
      <div className="absolute top-[2px] flex h-1 min-w-[3px] items-center justify-center rounded-[1px] bg-[#6b5a22]" style={style}>
        <span className="size-[2px] shrink-0 bg-[#f3e6b8]" />
      </div>
    );
  }
  const muted = flags.includes('m');
  return (
    <div
      style={style}
      className={`absolute top-px flex h-[7px] items-center overflow-hidden rounded-[1px] font-[Roboto] text-[7px] leading-[7px] font-bold whitespace-nowrap ${
        muted ? 'bg-[#3a3a3a] text-[#a4a4a4]' : `text-[#f3ecd9] ${FILL[color]}`
      }`}
    >
      {muted && <span className={`ml-[3px] size-[5px] shrink-0 rounded-full ${color === 'pink' ? 'bg-[#cf7cc0]' : 'bg-[#6ff0b8]'}`} />}
      <span className={label ? 'pl-[3px]' : ''}>{label}</span>
      {flags.includes('t') && <LoopMark />}
    </div>
  );
}

function Ruler() {
  return (
    <div className="relative h-[22px] shrink-0 overflow-hidden bg-[#292929] text-[#a8a8a8]">
      <span className="absolute top-0 left-2 text-[7px] leading-[10px]">:00:00</span>
      {TIMES.map((t, i) => (
        <span key={t} className="absolute top-0 border-l border-[#666] pl-[2px] text-[7px] leading-[10px]" style={{ left: 56 + i * 54 }}>{t}</span>
      ))}
      <div className="absolute top-[11px] h-[10px] bg-linear-to-b from-[#d6a655] to-[#c4923e]" style={{ left: 280 - LANES_X, width: 631 }} />
      {BARS.map(bar => (
        <span
          key={bar}
          className="absolute top-[11px] h-[10px] border-l border-[#5b4415] pl-[2px] text-[8px] leading-[10px] text-[#3b2c0e]"
          style={{ left: Math.round(BAR_ONE + (bar - 1) * BAR_WIDTH) - LANES_X }}
        >
          {bar}
        </span>
      ))}
      <span className="absolute top-[11px] left-[649px] pl-[2px] text-[8px] leading-[10px]">45</span>
      <span className="absolute top-[11px] left-[681px] border-l border-[#777] pl-px text-[8px] leading-[10px]">153</span>
      <div className="absolute inset-y-0 right-0 left-[689px] bg-[#171717]/80 pl-4 text-[7px] leading-[10px] text-[#444]">1:0</div>
      <span className="absolute top-[2px] left-[690px] text-[6px] leading-[7px] text-[#777]">◀</span>
    </div>
  );
}

function Lanes() {
  return (
    <div className="flex min-w-0 flex-1 flex-col bg-[#222]">
      <Ruler />
      <div className="relative min-h-0 flex-1 overflow-hidden border-t border-[#151515] pt-2">
        <div className="absolute inset-x-0 top-0 h-2 border-b border-[#161616] bg-[#303030]" />
        {Array.from({ length: 154 }, (_, i) => (
          <span
            key={i}
            className={`absolute inset-y-0 w-px ${i % 4 === 0 ? 'bg-white/7' : 'bg-white/3'}`}
            style={{ left: Math.round(BAR_ONE + i * BAR_WIDTH) - LANES_X }}
          />
        ))}
        <div className="absolute inset-y-0 right-0 left-[689px] border-l border-[#101010] bg-[#191919]" />
        <ol>
          {TRACKS.map(([, color, regions], i) => (
            <li key={i} className="relative h-2 bg-linear-to-b from-black/15 from-10% to-transparent to-10% nth-[6n]:h-[9px]">
              {regions.map((r, k) => <Region key={k} region={r} color={color} />)}
            </li>
          ))}
        </ol>
        {/* playhead */}
        <div className="absolute inset-y-0 w-px bg-[#808080]" style={{ left: 279 - LANES_X }} />
        <svg viewBox="0 0 8 8" className="absolute top-0 size-2" style={{ left: 275 - LANES_X }}><path d="M0 1h8v3L4 8 0 4z" fill="#9a9aa4" /></svg>
      </div>
    </div>
  );
}

export default function App() {
  return (
    <div className="flex h-screen flex-col overflow-hidden bg-[#7a7a7a] font-['Liberation_Sans',sans-serif]">
      <Toolbar />
      <main className="flex min-h-0 flex-1 gap-[2px] bg-[#1c1c1c] pl-px">
        <Inspector />
        <div className="flex min-w-0 flex-1 flex-col">
          <MenuBar />
          <div className="flex min-h-0 flex-1">
            <TrackList />
            <Lanes />
          </div>
        </div>
      </main>
      <div className="h-[2px] shrink-0 bg-[#6a6a6a]" />
    </div>
  );
}
